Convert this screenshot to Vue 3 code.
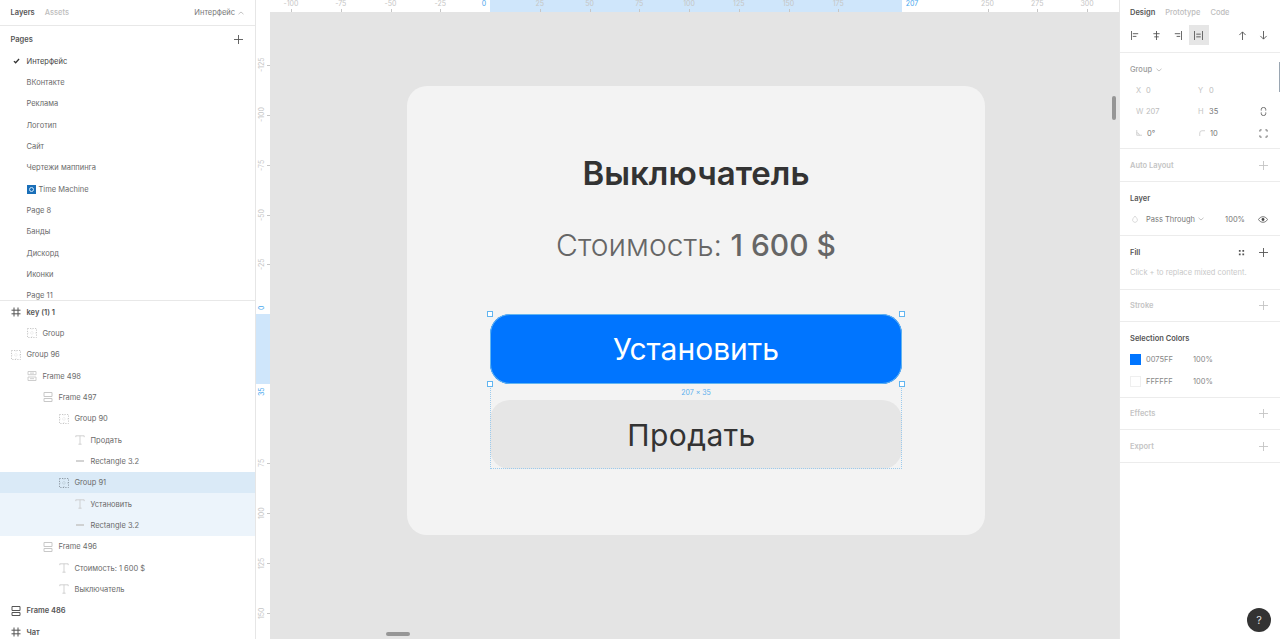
<template>
  <div class="app">
    <svg class="defs" width="0" height="0">
      <defs>
        <symbol id="i-hash" viewBox="0 0 10 10"><path d="M3 .5v9M7 .5v9M.5 3.2h9M.5 6.8h9" fill="none" stroke="currentColor" stroke-width="1" /></symbol>
        <symbol id="i-group" viewBox="0 0 10 10"><path d="M.5 .5h9v9h-9z" fill="none" stroke="currentColor" stroke-width="1" stroke-dasharray="1.2 1.3" /><path d="M.5 5h9M5 .5v9" fill="none" stroke="currentColor" stroke-width=".7" stroke-dasharray="1.2 1.3" opacity=".6" /></symbol>
        <symbol id="i-frame" viewBox="0 0 10 10"><path d="M1 .5h8v4H1zM1 6.5h8v3H1z" fill="none" stroke="currentColor" stroke-width="1" /></symbol>
        <symbol id="i-frameh" viewBox="0 0 10 10"><path d="M1 .5h8v3.2H1zM1 6h8v3.5H1zM3 2.1h4M3 7.7h4" fill="none" stroke="currentColor" stroke-width=".9" /></symbol>
        <symbol id="i-text" viewBox="0 0 10 10"><path d="M.8 2.2V.8h8.4v1.4M5 .8v8.4M3.4 9.2h3.2" fill="none" stroke="currentColor" stroke-width=".8" /></symbol>
        <symbol id="i-rect" viewBox="0 0 10 10"><path d="M1 4.2h8v1.6H1z" fill="currentColor" /></symbol>
      </defs>
    </svg>

    <aside class="left">
      <div class="left-tabs">
        <span class="tab-on">Layers</span>
        <span class="tab-off">Assets</span>
        <span class="left-page">Интерфейс
          <svg class="chev" viewBox="0 0 6 4"><path d="M.5 3.2 3 1l2.5 2.2" fill="none" stroke="currentColor" stroke-width=".7" /></svg>
        </span>
      </div>
      <div class="pages">
        <div class="pages-head">
          <span class="tab-on">Pages</span>
          <svg class="plus dark" viewBox="0 0 10 10"><path d="M5 0v10M0 5h10" stroke="currentColor" stroke-width="1" /></svg>
        </div>
        <div v-for="page in pages" :key="page" class="page-row" :class="{ current: page === 'Интерфейс' }">
          <svg v-if="page === 'Интерфейс'" class="check" viewBox="0 0 8 7"><path d="M1 3.6 3 5.6 7 1.2" fill="none" stroke="currentColor" stroke-width="1.5" /></svg>
          <span v-if="page === 'Time Machine'" class="tm-icon"><i></i></span>
          {{ page }}
        </div>
      </div>
      <div class="layers">
        <div
          v-for="(row, i) in layers"
          :key="i"
          class="layer-row"
          :class="[row.cls, 'depth-' + row.depth]"
        >
          <svg class="layer-icon"><use :href="'#i-' + row.icon" /></svg>
          <span>{{ row.name }}</span>
        </div>
      </div>
    </aside>

    <main class="stage">
      <div class="ruler-top">
        <div class="ruler-hi-top"></div>
        <span
          v-for="m in topMarks"
          :key="m.label"
          class="top-mark"
          :class="{ blue: m.blue }"
          :style="{ left: m.x + 'px' }"
        >{{ m.label }}<i v-if="!m.blue"></i></span>
      </div>
      <div class="ruler-left">
        <div class="ruler-hi-left"></div>
        <span
          v-for="m in leftMarks"
          :key="m.label"
          class="left-mark"
          :class="{ blue: m.blue }"
          :style="{ top: m.y + 'px' }"
        >{{ m.label }}</span>
        <i v-for="m in leftMarks.filter(t => !t.blue)" :key="'t' + m.label" class="left-tick" :style="{ top: m.y + 'px' }"></i>
      </div>

      <div class="artboard">
        <h1 class="title">Выключатель</h1>
        <p class="cost">Стоимость: <b>1 600 $</b></p>
        <div class="actions">
          <div class="btn btn-blue">
            Установить
            <i class="handle tl"></i><i class="handle tr"></i><i class="handle bl"></i><i class="handle br"></i>
          </div>
          <div class="size-tag">207 × 35</div>
          <div class="btn btn-grey">Продать</div>
          <div class="dots"></div>
        </div>
      </div>

      <div class="scroll-v"></div>
      <div class="scroll-h"></div>
    </main>

    <aside class="right">
      <section class="sec sec-top">
        <div class="tabs-r">
          <span class="tab-on">Design</span>
          <span class="tab-off">Prototype</span>
          <span class="tab-off">Code</span>
        </div>
        <div class="align-row">
          <span class="al"><svg viewBox="0 0 10 10"><path d="M.5 0v10M2 3h6M2 6h4" fill="none" stroke="currentColor" stroke-width="1" /></svg></span>
          <span class="al"><svg viewBox="0 0 10 10"><path d="M5 0v10M1.5 3h7M2.5 6.5h5" fill="none" stroke="currentColor" stroke-width="1" /></svg></span>
          <span class="al"><svg viewBox="0 0 10 10"><path d="M9.5 0v10M2 3h6M4 6h4" fill="none" stroke="currentColor" stroke-width="1" /></svg></span>
          <span class="al active"><svg viewBox="0 0 10 10"><path d="M.5 0v10M9.5 0v10M2.5 3.5h5M2.5 6.5h5" fill="none" stroke="currentColor" stroke-width="1" /></svg></span>
          <span class="al arrow first"><svg viewBox="0 0 10 10"><path d="M5 10V1M1.5 4.5 5 1l3.5 3.5" fill="none" stroke="currentColor" stroke-width="1" /></svg></span>
          <span class="al arrow"><svg viewBox="0 0 10 10"><path d="M5 0v9M1.5 5.5 5 9l3.5-3.5" fill="none" stroke="currentColor" stroke-width="1" /></svg></span>
        </div>
      </section>

      <section class="sec sec-props">
        <div class="group-name">Group
          <svg class="chev down" viewBox="0 0 6 4"><path d="M.5 .8 3 3l2.5-2.2" fill="none" stroke="currentColor" stroke-width=".7" /></svg>
        </div>
        <div class="prop-row"><span class="k">X</span><span class="v dim">0</span><span class="k k2">Y</span><span class="v dim">0</span></div>
        <div class="prop-row"><span class="k">W</span><span class="v dim">207</span><span class="k k2">H</span><span class="v">35</span>
          <svg class="prop-ic" viewBox="0 0 10 10"><path d="M2.5 4V2.5a2.5 2 0 0 1 5 0V4M2.5 6v1.5a2.5 2 0 0 0 5 0V6" fill="none" stroke="currentColor" stroke-width="1" /></svg>
        </div>
        <div class="prop-row">
          <svg class="k-ic" viewBox="0 0 8 8"><path d="M1 0v7h7M1 3.5a4 4 0 0 1 3.5 3.5" fill="none" stroke="currentColor" stroke-width=".8" /></svg>
          <span class="v">0°</span>
          <svg class="k-ic k2" viewBox="0 0 8 8"><path d="M1 8V4a3 3 0 0 1 3-3h4" fill="none" stroke="currentColor" stroke-width=".8" /></svg>
          <span class="v">10</span>
          <svg class="prop-ic" viewBox="0 0 10 10"><path d="M1 3V1h2M7 1h2v2M9 7v2H7M3 9H1V7" fill="none" stroke="currentColor" stroke-width="1" /></svg>
        </div>
      </section>

      <section class="sec sec-line">
        <span class="muted">Auto Layout</span>
        <svg class="plus" viewBox="0 0 10 10"><path d="M5 0v10M0 5h10" stroke="currentColor" stroke-width="1" /></svg>
      </section>

      <section class="sec sec-layer">
        <div class="head">Layer</div>
        <div class="layer-props">
          <svg class="drop" viewBox="0 0 8 10"><path d="M4 1 6.6 4.4a3.2 3.2 0 1 1-5.2 0z" fill="none" stroke="currentColor" stroke-width=".8" /></svg>
          <span class="blend">Pass Through
            <svg class="chev down" viewBox="0 0 6 4"><path d="M.5 .8 3 3l2.5-2.2" fill="none" stroke="currentColor" stroke-width=".7" /></svg>
          </span>
          <span class="pct">100%</span>
          <svg class="eye" viewBox="0 0 12 8"><path d="M.5 4C2 1.8 3.8.7 6 .7s4 1.1 5.5 3.3C10 6.2 8.2 7.3 6 7.3S2 6.2.5 4z" fill="none" stroke="currentColor" stroke-width=".9" /><circle cx="6" cy="4" r="1.7" fill="currentColor" /></svg>
        </div>
      </section>

      <section class="sec sec-fill">
        <div class="head-row">
          <span class="head">Fill</span>
          <svg class="fourdots" viewBox="0 0 8 8"><path d="M1 1h2v2H1zM5 1h2v2H5zM1 5h2v2H1zM5 5h2v2H5z" fill="currentColor" /></svg>
          <svg class="plus dark" viewBox="0 0 10 10"><path d="M5 0v10M0 5h10" stroke="currentColor" stroke-width="1" /></svg>
        </div>
        <div class="hint">Click + to replace mixed content.</div>
      </section>

      <section class="sec sec-line short">
        <span class="muted">Stroke</span>
        <svg class="plus" viewBox="0 0 10 10"><path d="M5 0v10M0 5h10" stroke="currentColor" stroke-width="1" /></svg>
      </section>

      <section class="sec sec-colors">
        <div class="head">Selection Colors</div>
        <div v-for="c in colors" :key="c" class="color-row">
          <span class="swatch" :class="{ blank: c === 'FFFFFF' }" :style="{ background: '#' + c }"></span>
          <span class="hex">{{ c }}</span>
          <span class="hex">100%</span>
        </div>
      </section>

      <section class="sec sec-line short">
        <span class="muted">Effects</span>
        <svg class="plus" viewBox="0 0 10 10"><path d="M5 0v10M0 5h10" stroke="currentColor" stroke-width="1" /></svg>
      </section>
      <section class="sec sec-line">
        <span class="muted">Export</span>
        <svg class="plus" viewBox="0 0 10 10"><path d="M5 0v10M0 5h10" stroke="currentColor" stroke-width="1" /></svg>
      </section>

      <div class="panel-scroll"></div>
      <div class="help">?</div>
    </aside>
  </div>
</template>

<script setup>
const pages = ['Интерфейс', 'ВКонтакте', 'Реклама', 'Логотип', 'Сайт', 'Чертежи маппинга', 'Time Machine', 'Page 8', 'Банды', 'Дискорд', 'Иконки', 'Page 11']

const layers = [
  { name: 'key (1) 1', icon: 'hash', depth: 0, cls: 'top' },
  { name: 'Group', icon: 'group', depth: 1 },
  { name: 'Group 96', icon: 'group', depth: 0 },
  { name: 'Frame 498', icon: 'frameh', depth: 1 },
  { name: 'Frame 497', icon: 'frame', depth: 2 },
  { name: 'Group 90', icon: 'group', depth: 3 },
  { name: 'Продать', icon: 'text', depth: 4 },
  { name: 'Rectangle 3.2', icon: 'rect', depth: 4 },
  { name: 'Group 91', icon: 'group', depth: 3, cls: 'selected' },
  { name: 'Установить', icon: 'text', depth: 4, cls: 'child' },
  { name: 'Rectangle 3.2', icon: 'rect', depth: 4, cls: 'child' },
  { name: 'Frame 496', icon: 'frame', depth: 2 },
  { name: 'Стоимость: 1 600 $', icon: 'text', depth: 3 },
  { name: 'Выключатель', icon: 'text', depth: 3 },
  { name: 'Frame 486', icon: 'frame', depth: 0, cls: 'top' },
  { name: 'Чат', icon: 'hash', depth: 0, cls: 'top' }
]

const colors = ['0075FF', 'FFFFFF']

// ruler zero sits at x=490 / y=314 of the page, 1 unit is about 1.99px
const topMarks = [-100, -75, -50, -25, 25, 50, 75, 100, 125, 150, 175, 250, 275, 300]
  .map(v => ({ label: String(v), x: 234 + v * 1.99 }))
  .concat([{ label: '0', x: 228, blue: true }, { label: '207', x: 656, blue: true }])

const leftMarks = [-125, -100, -75, -50, -25, 75, 100, 125, 150]
  .map(v => ({ label: String(v), y: 314 + v * 1.99 }))
  .concat([{ label: '0', y: 308, blue: true }, { label: '35', y: 392, blue: true }])
</script>

<style>
html, body {
  margin: 0;
  background: #fff;
  overflow: hidden;
}
</style>

<style scoped>
.app {
  display: flex;
  width: 1280px;
  height: 639px;
  overflow: hidden;
  font-family: Inter, "Noto Sans", sans-serif;
  font-size: 7.5px;
  color: #5f5f5f;
  background: #fff;
}

.defs {
  position: absolute;
}

.tab-on {
  font-weight: 600;
  color: #555;
}

.tab-off {
  font-weight: 500;
  color: #bdbdbd;
}

/* left panel */
.left {
  width: 255px;
  flex-shrink: 0;
  display: flex;
  flex-direction: column;
  border-right: 1px solid #e6e6e6;
  box-sizing: content-box;
}

.left-tabs {
  height: 25px;
  display: flex;
  align-items: center;
  gap: 10px;
  padding: 0 11px 0 10.5px;
  border-bottom: 1px solid #e8e8e8;
  flex-shrink: 0;
}

.left-page {
  margin-left: auto;
  display: flex;
  align-items: center;
  gap: 3px;
  color: #777;
}

.chev {
  width: 6px;
  height: 4px;
  color: #aaa;
}

.pages {
  height: 274px;
  overflow: hidden;
  border-bottom: 1px solid #e8e8e8;
  flex-shrink: 0;
}

.pages-head {
  height: 24px;
  box-sizing: border-box;
  padding: 2px 12px 0 10.5px;
  display: flex;
  align-items: center;
  justify-content: space-between;
}

.plus {
  width: 9px;
  height: 9px;
  color: #c4c4c4;
  flex-shrink: 0;
}

.plus.dark {
  color: #555;
}

.page-row {
  position: relative;
  height: 21.33px;
  box-sizing: border-box;
  padding: 1px 0 0 26.5px;
  display: flex;
  align-items: center;
  color: #6a6a6a;
}

.page-row.current {
  color: #444;
}

.check {
  position: absolute;
  left: 13px;
  top: 8px;
  width: 7px;
  height: 6px;
  color: #333;
}

.tm-icon {
  width: 9px;
  height: 9px;
  background: #1a6fb8;
  margin-right: 3px;
  display: flex;
  align-items: center;
  justify-content: center;
}

.tm-icon i {
  width: 3px;
  height: 3px;
  border: 1px solid #cfe6fb;
  border-radius: 50%;
}

.layer-row {
  position: relative;
  height: 21.33px;
  box-sizing: border-box;
  padding-top: 1px;
  display: flex;
  align-items: center;
  color: #6a6a6a;
}

.layer-row.top {
  font-weight: 600;
  color: #555;
}

.layer-row.selected {
  background: #daeaf7;
}

.layer-row.child {
  background: #ecf4fb;
}

.layer-icon {
  width: 10px;
  height: 10px;
  margin-right: 5.5px;
  flex-shrink: 0;
  color: #c8c8c8;
}

.layer-row.top .layer-icon {
  color: #555;
}

.layer-row.selected .layer-icon {
  color: #8f9aa5;
}

.depth-0 { padding-left: 11px; }
.depth-1 { padding-left: 27px; }
.depth-2 { padding-left: 43px; }
.depth-3 { padding-left: 59px; }
.depth-4 { padding-left: 75px; }

/* canvas */
.stage {
  position: relative;
  flex: 1;
  min-width: 0;
  background: #e4e4e4;
}

.ruler-top {
  position: absolute;
  left: 0;
  right: 0;
  top: 0;
  height: 12px;
  background: #fff;
}

.ruler-hi-top {
  position: absolute;
  left: 234px;
  width: 412px;
  top: 0;
  bottom: 0;
  background: #cfe6fb;
}

.top-mark {
  position: absolute;
  top: 0;
  width: 0;
  display: flex;
  justify-content: center;
  white-space: nowrap;
  font-size: 7px;
  line-height: 8px;
  color: #c6c6c6;
}

.top-mark i {
  position: absolute;
  left: 0;
  top: 9px;
  width: 1px;
  height: 3px;
  background: #c6c6c6;
}

.top-mark.blue,
.left-mark.blue {
  color: #4aa8ee;
}

.ruler-left {
  position: absolute;
  left: 0;
  top: 0;
  bottom: 0;
  width: 14px;
  background: #fff;
}

.ruler-hi-left {
  position: absolute;
  left: 0;
  right: 0;
  top: 314px;
  height: 70px;
  background: #cfe6fb;
}

.left-mark {
  position: absolute;
  left: 2px;
  height: 0;
  display: flex;
  align-items: center;
  justify-content: center;
  writing-mode: vertical-rl;
  transform: rotate(180deg);
  font-size: 7px;
  line-height: 8px;
  white-space: nowrap;
  color: #c6c6c6;
}

.left-tick {
  position: absolute;
  right: 0;
  width: 3px;
  height: 1px;
  background: #c6c6c6;
}

.artboard {
  position: absolute;
  left: 151px;
  top: 86px;
  width: 578px;
  height: 449px;
  box-sizing: border-box;
  background: #f3f3f3;
  border-radius: 20px;
  display: flex;
  flex-direction: column;
  align-items: center;
  padding-top: 64px;
}

.title {
  margin: 0;
  font-size: 33px;
  line-height: 46px;
  font-weight: 600;
  color: #333;
}

.cost {
  margin: 26px 0 0;
  font-size: 30px;
  line-height: 46px;
  font-weight: 300;
  color: #666;
}

.cost b {
  font-weight: 500;
}

.actions {
  position: relative;
  margin-top: 46px;
  width: 412px;
  display: flex;
  flex-direction: column;
}

.btn {
  position: relative;
  height: 70px;
  border-radius: 20px;
  display: flex;
  align-items: center;
  justify-content: center;
  font-size: 30px;
}

.btn-blue {
  background: #0075ff;
  color: #fff;
  outline: 1px solid #62b5f0;
  outline-offset: -1px;
}

.btn-grey {
  height: 69px;
  background: #e6e6e6;
  color: #333;
  letter-spacing: .4px;
  padding-right: 9px;
}

.size-tag {
  height: 16px;
  line-height: 17px;
  text-align: center;
  font-size: 7px;
  color: #5cb0ee;
}

.dots {
  position: absolute;
  left: 0;
  right: 0;
  top: 70px;
  bottom: 0;
  border: 1px dotted #9ccbee;
  border-top: 0;
  pointer-events: none;
}

.handle {
  position: absolute;
  width: 4px;
  height: 4px;
  background: #fff;
  border: 1px solid #62b5f0;
  z-index: 2;
}

.tl { left: -3px; top: -3px; }
.tr { right: -3px; top: -3px; }
.bl { left: -3px; bottom: -3px; }
.br { right: -3px; bottom: -3px; }

.scroll-v {
  position: absolute;
  left: 856px;
  top: 96px;
  width: 4px;
  height: 24px;
  border-radius: 2px;
  background: #969696;
}

.scroll-h {
  position: absolute;
  left: 130px;
  top: 632px;
  width: 24px;
  height: 4px;
  border-radius: 2px;
  background: #969696;
}

/* right panel */
.right {
  position: relative;
  width: 161px;
  flex-shrink: 0;
  border-left: 1px solid #e6e6e6;
  box-sizing: border-box;
}

.sec {
  box-sizing: border-box;
  padding: 0 10px;
  border-bottom: 1px solid #ececec;
}

.sec-top {
  height: 53px;
}

.tabs-r {
  height: 25px;
  display: flex;
  align-items: center;
  gap: 10px;
}

.align-row {
  display: flex;
  align-items: center;
  height: 20px;
  margin-left: -5px;
}

.al {
  width: 20px;
  height: 20px;
  margin-right: 1.3px;
  flex-shrink: 0;
  display: flex;
  align-items: center;
  justify-content: center;
  color: #555;
}

.al svg {
  width: 9px;
  height: 9px;
}

.al.active {
  background: #e6e6e6;
}

.al.first {
  margin-left: 22px;
}

.sec-props {
  height: 96px;
}

.group-name {
  height: 33px;
  margin-bottom: -6px;
  display: flex;
  align-items: center;
  gap: 4px;
  color: #9a9a9a;
  font-weight: 500;
}

.prop-row {
  height: 21.3px;
  display: flex;
  align-items: center;
  color: #777;
}

.k {
  width: 16px;
  padding-left: 6px;
  box-sizing: border-box;
  color: #c4c4c4;
}

.k-ic {
  width: 6px;
  height: 6px;
  margin: 0 5px 0 6px;
  color: #b5b5b5;
  flex-shrink: 0;
}

.v {
  width: 36px;
}

.dim {
  color: #bbb;
}

.k-ic.k2 {
  margin-left: 16px;
}

.k.k2 {
  padding-left: 0;
  width: 11px;
  margin-left: 16px;
}

.prop-ic {
  width: 9px;
  height: 9px;
  margin-left: auto;
  margin-right: 2.5px;
  color: #666;
}

.sec-line {
  height: 33px;
  display: flex;
  align-items: center;
  justify-content: space-between;
  padding-right: 12px;
}

.sec-line.short {
  height: 32px;
}

.muted {
  font-weight: 600;
  color: #c4c4c4;
}

.sec-layer {
  height: 54px;
}

.head {
  font-weight: 600;
  color: #555;
}

.sec-layer .head {
  height: 32px;
  line-height: 33px;
}

.layer-props {
  display: flex;
  align-items: center;
  height: 10px;
}

.drop {
  width: 6px;
  height: 8px;
  margin: 0 8px 0 2px;
  color: #c4c4c4;
}

.blend {
  display: flex;
  align-items: center;
  gap: 3px;
  color: #777;
}

.pct {
  margin-left: auto;
  color: #777;
}

.eye {
  width: 10px;
  height: 7px;
  margin-left: 13px;
  margin-right: 2px;
  color: #444;
}

.sec-fill {
  height: 54px;
}

.head-row {
  height: 32px;
  display: flex;
  align-items: center;
  padding-right: 2px;
}

.fourdots {
  width: 7px;
  height: 7px;
  margin-left: auto;
  margin-right: 14px;
  color: #555;
}

.hint {
  color: #c8c8c8;
  line-height: 10px;
}

.sec-colors {
  height: 76px;
}

.sec-colors .head {
  height: 32px;
  line-height: 33px;
  margin-bottom: -5px;
}

.color-row {
  height: 21.5px;
  display: flex;
  align-items: center;
  color: #888;
}

.swatch {
  width: 11px;
  height: 11px;
  margin-right: 5px;
  box-sizing: border-box;
}

.swatch.blank {
  border: 1px solid #efefef;
}

.hex {
  width: 47px;
}

.panel-scroll {
  position: absolute;
  right: 0;
  top: 62px;
  width: 1px;
  height: 30px;
  background: #9aa6b2;
}

.help {
  position: absolute;
  left: 127px;
  top: 608px;
  width: 24px;
  height: 24px;
  border-radius: 50%;
  background: #333;
  color: #ddd;
  display: flex;
  align-items: center;
  justify-content: center;
  font-size: 11px;
}
</style>
